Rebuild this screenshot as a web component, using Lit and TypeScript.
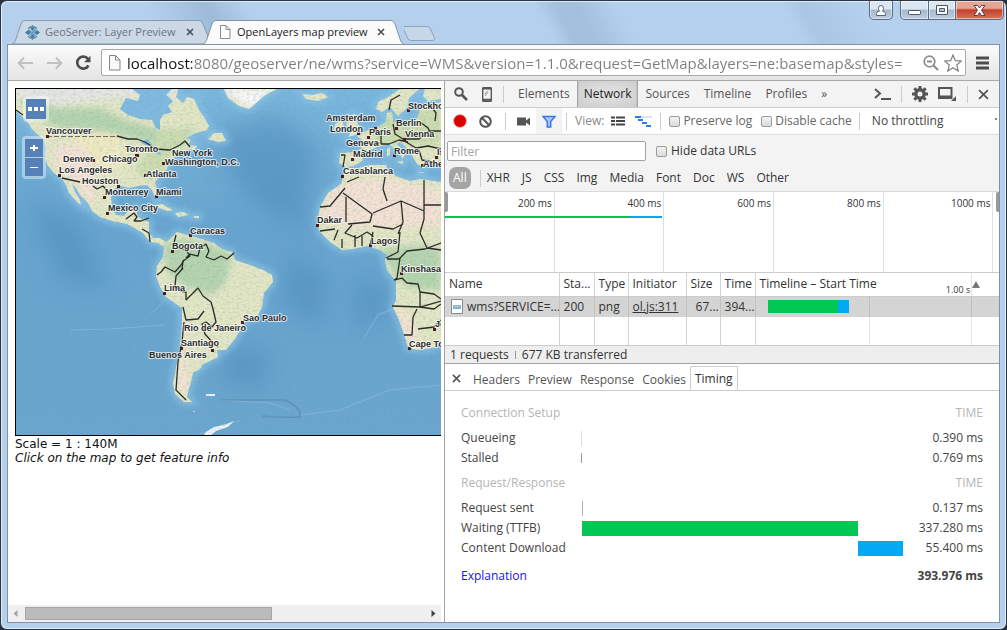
import { LitElement, html, css, svg } from "lit";
import { customElement } from "lit/decorators.js";
import { classMap } from "lit/directives/class-map.js";

const reset = css`
  * { box-sizing: border-box; }
  button, input, select {
    font: inherit; color: inherit; margin: 0; padding: 0;
    border: 0; background: none; outline: none; appearance: none; border-radius: 0;
  }
  svg { display: block; flex: none; }
`;

/* ---------- window caption and tab strip ---------- */

@customElement("tab-strip")
export class TabStrip extends LitElement {
  static styles = [reset, css`
    :host { display: flex; justify-content: space-between; height: 43px; padding-left: 11px; font-size: 11px; }
    .tabs { display: flex; align-items: flex-end; }
    .tab { position: relative; display: flex; align-items: center; width: 201px; height: 24px; padding: 0 17px 0 13px; color: #6d747c; }
    .tab + .tab { margin-left: -10px; z-index: 1; color: #222; padding-left: 15px; }
    .shape { position: absolute; inset: 0; width: 100%; height: 100%; }
    .icon, .label, .close { position: relative; }
    .label { flex: 1; text-align: left; padding-left: 5px; white-space: nowrap; line-height: 16px; }
    .close { display: flex; padding: 2px; }
    .new { align-self: flex-end; height: 18px; }
    .controls { display: flex; align-items: flex-start; padding-right: 2px; }
    .win { display: grid; place-items: center; height: 19px; border: 1px solid #5b6b80; border-top: 0;
      background: linear-gradient(#dbe6f1 0 45%, #a5b8cd 50%, #bccee1); box-shadow: inset 0 0 0 1px #ffffff80; }
    .user { width: 24px; border-radius: 0 0 5px 5px; margin-right: 7px; }
    .min { width: 29px; border-radius: 0 0 0 5px; }
    .max { width: 27px; border-left: 0; }
    .shut { width: 48px; border-left: 0; border-radius: 0 0 5px 0; background: linear-gradient(#e5a594 0 40%, #c2402a 50%, #d8735a); }
  `];

  private cross() {
    return html`<svg width="8" height="8" viewBox="0 0 8 8"><path d="M1 1l6 6M7 1l-6 6" stroke="#4e5258" stroke-width="1.7"/></svg>`;
  }

  render() {
    return html`
      <div class="tabs">
        <div class="tab">
          <svg class="shape" viewBox="0 0 202 24" preserveAspectRatio="none">
            <path d="M0 24C3 23 3 21 4 19L9 4Q10 .5 13 .5H188Q191 .5 192 4L198 19Q199 23 202 24Z" fill="#cbd8e6" stroke="#8799ad"/></svg>
          <svg class="icon" width="15" height="15" viewBox="0 0 15 15">
            <path d="M7.500 0L10 3 7.500 6 5 3zM7.500 9L10 12 7.500 15 5 12zM0 7.500L3 5 6 7.500 3 10zM9 7.500L12 5 15 7.500 12 10z" fill="#3f7fa6"/>
            <path d="M3 3.500Q7.500-.5 12 3.500M12 11.500Q7.500 15 3 11.500M3.500 4.500L11 11M11 4L4 11" fill="none" stroke="#5f93b2" stroke-width="1.300"/></svg>
          <span class="label">GeoServer: Layer Preview</span>
          <button class="close" aria-label="Close tab">${this.cross()}</button>
        </div>
        <div class="tab">
          <svg class="shape" viewBox="0 0 202 24" preserveAspectRatio="none">
            <path d="M0 24C3 23 3 21 4 19L9 4Q10 .5 13 .5H189Q192 .5 193 4L198 19Q199 23 202 24Z" fill="#fbfbfb"/>
            <path d="M0 24C3 23 3 21 4 19L9 4Q10 .5 13 .5H189Q192 .5 193 4L198 19Q199 23 202 24" fill="none" stroke="#8293a6"/></svg>
          <svg class="icon" width="14" height="14" viewBox="0 0 14 14"><path d="M2.500.5H8L12 4.500V13.500H2.500zM8 .5V4.500H12" fill="#fff" stroke="#8a8a8a"/></svg>
          <span class="label">OpenLayers map preview</span>
          <button class="close" aria-label="Close tab">${this.cross()}</button>
        </div>
        <button class="new" aria-label="New tab">
          <svg width="34" height="18" viewBox="0 0 34 18"><path d="M1 .5H22Q25 .5 26 2L30.500 12Q31.500 14.500 28 14.500H7Q4.500 14.500 3.500 12L-.5 3Q-1.500 .5 1 .5z" fill="#c6d7e8" stroke="#8fa3ba"/></svg>
        </button>
      </div>
      <div class="controls">
        <button class="win user" aria-label="User"><svg width="10" height="11" viewBox="0 0 10 11"><path d="M.5 10.500V8.500Q.5 6.500 3.500 6.200 2.500 5 2.500 3.200 2.500.5 5 .5T7.500 3.200Q7.500 5 6.500 6.200 9.500 6.500 9.500 8.500V10.500z" fill="#fff" stroke="#596779"/></svg></button>
        <button class="win min" aria-label="Minimize"><svg width="13" height="12" viewBox="0 0 13 12"><rect x=".5" y="6.500" width="12" height="4" rx="1" fill="#fff" stroke="#4b5767"/></svg></button>
        <button class="win max" aria-label="Maximize"><svg width="12" height="11" viewBox="0 0 12 11"><path d="M.5.5H11.500V9.500H.5zM3.500 3.500V6.500H8.500V3.500z" fill="#fff" fill-rule="evenodd" stroke="#4b5767"/></svg></button>
        <button class="win shut" aria-label="Close"><svg width="13" height="11" viewBox="0 0 13 11"><path d="M1 .5H4.500L6.500 3 8.500.5H12L8.500 5.200 12 10.500H8.500L6.500 7.500 4.500 10.500H1L4.500 5.200z" fill="#fff" stroke="#5b3c45"/></svg></button>
      </div>`;
  }
}

/* ---------- navigation toolbar ---------- */

@customElement("nav-bar")
export class NavBar extends LitElement {
  static styles = [reset, css`
    :host { display: flex; align-items: center; gap: 10px; height: 37px; padding: 0 10px 0 9px;
      background: linear-gradient(#fbfbfb, #e4e4e4); border-bottom: 1px solid #a9a9a9; border-top: 1px solid #8293a6; }
    .btn { display: flex; }
    .btn + .btn { margin-left: 2px; }
    .box { flex: 1; min-width: 0; display: flex; align-items: center; gap: 5px; height: 27px; padding: 0 3px 0 6px;
      background: #fff; border: 1px solid #a8a8a8; border-radius: 2px; }
    .box .btn + .btn { margin-left: 0; }
    .url { flex: 1; min-width: 0; height: 24px; font-size: 15px; line-height: 24px; color: transparent;
      background: linear-gradient(90deg, #111 65px, #7f7f7f 65px); -webkit-background-clip: text; background-clip: text; }
  `];

  render() {
    return html`
      <button class="btn" aria-label="Back"><svg width="17" height="14" viewBox="0 0 17 14"><path d="M7 1.500L1.800 7 7 12.500M2 7H16" fill="none" stroke="#c2c2c2" stroke-width="2.200"/></svg></button>
      <button class="btn" aria-label="Forward"><svg width="17" height="14" viewBox="0 0 17 14"><path d="M10 1.500L15.200 7 10 12.500M15 7H1" fill="none" stroke="#c2c2c2" stroke-width="2.200"/></svg></button>
      <button class="btn" aria-label="Reload"><svg width="16" height="16" viewBox="0 0 16 16"><path d="M13.200 4.200A6 6 0 1 0 13.500 10.500" fill="none" stroke="#4c4c4c" stroke-width="2.600"/><path d="M15.500 .8V7.300H9z" fill="#4c4c4c"/></svg></button>
      <div class="box">
        <svg width="14" height="16" viewBox="0 0 14 16"><path d="M1.500.5H7.500L12 5V15H1.500zM7.500.5V5H12" fill="#fafafa" stroke="#858585"/></svg>
        <input class="url" aria-label="Address" .value=${"localhost:8080/geoserver/ne/wms?service=WMS&version=1.1.0&request=GetMap&layers=ne:basemap&styles="}>
        <button class="btn" aria-label="Zoom"><svg width="16" height="16" viewBox="0 0 16 16"><circle cx="6.500" cy="6.500" r="5.300" fill="none" stroke="#8d8d8d" stroke-width="1.700"/><path d="M4 6.500H9M10.500 10.500L15 15" stroke="#8d8d8d" stroke-width="2"/></svg></button>
        <button class="btn" aria-label="Bookmark"><svg width="18" height="18" viewBox="0 0 18 18"><path d="M9 1L11.300 6.700 17.300 7.100 12.700 11 14.200 17 9 13.700 3.800 17 5.300 11 .7 7.100 6.700 6.700z" fill="#fff" stroke="#808080" stroke-width="1.200"/></svg></button>
      </div>
      <button class="btn" aria-label="Menu"><svg width="13" height="14" viewBox="0 0 13 14"><path d="M0 2H13M0 7H13M0 12H13" stroke="#4c4c4c" stroke-width="3"/></svg></button>`;
  }
}

/* ---------- map page ---------- */

const LAND = [
  "M16 89H178L176 97 183 103 187 97 194 99 199 110 204 117 209 126 207 130 196 133 186 138 191 140 188 145 197 146 195 149 186 150 180 154 173 158 168 163 167 169 160 176 155 182 157 190 158 197 155 197 152 190 147 185 138 186 130 188 120 186 114 189 111 197 112 208 116 215 124 216 128 211 137 208 137 215 141 219 149 222 149 233 153 238 160 238 166 242 170 239 177 232 184 234 195 237 205 240 214 243 222 249 232 252 235 260 250 265 263 270 272 275 273 282 264 293 262 307 257 317 246 321 240 330 235 339 226 350 217 350 218 357 210 361 203 364 200 369 193 373 191 382 188 392 187 397 192 402 184 402 175 394 173 383 177 363 180 347 182 323 182 308 166 297 160 287 156 276 157 266 163 257 164 247 158 243 150 242 143 233 127 224 112 221 100 217 92 211 88 203 80 195 76 188 72 183 75 192 80 200 81 205 76 201 69 193 66 185 62 179 54 173 48 166 45 158 46 148 44 139 38 135 32 129 27 121 16 111z",
  "M224 89H277L265 95 256 103 249 109 239 106 228 98z",
  "M302 94L312 95 322 93 328 97 318 101 306 99z",
  "M208 139L214 133 222 133 226 141 218 142z",
  "M152 206L162 204 173 210 168 211zM175 213L184 212 188 215 178 217zM194 216h5v2h-5z",
  "M335 124L342 120 344 127 339 131 334 130zM348 116L355 114 356 120 361 129 359 134 348 137 352 130 346 125z",
  "M345 168L358 168 370 165 386 165 388 172 398 177 410 181 421 179 441 182V344L433 348 417 350 408 348 405 337 399 320 393 307 396 300 396 281 387 270 385 260 387 255 380 250 368 246 353 249 342 250 330 242 320 232 317 223 320 207 328 193 341 184 344 175z",
  "M340 153L356 152 361 149 363 141 357 136 366 131 378 127 386 122 387 113 392 112 393 122 407 122 417 119 421 107 431 104 441 102V166L429 163 424 168 417 164 409 150 400 142 397 144 405 153 403 159 398 152 389 144 377 147 364 153 362 161 354 166 346 167 339 163z",
  "M376 109L378 102 388 97 400 89H419L409 98 407 108 398 116 390 107 382 112zM425 89H441V99L428 101 423 96z",
  "M387 149l3-2v8l-3 1zM396 162l7-1v3zM417 172l7 0-2 1z",
];

const BORDERS = [
  "M117 136L128 139 137 139 145 142 156 149 170 150 180 145 185 141 190 147",
  "M62 178L80 182M93 186L97 189 103 186 109 193",
  "M16 110L23 115M126 219l8-6 3 4-3 4h7l8-3M142 229l7 4 1 9M176 235l-2 8 5 5 7 2 4 6-7 5-1 9M186 258l4-4 8 2 2-8 6-4 3 7-3 6 8 3 7-4 6 3 7-6",
  "M157 275l4-3 4-5 10 5 6-7 3-5M183 268l-7 8-1 10 5 5 6 1 0 8 12-12 5 8 8 6 2 7 3 13-4 5-6-5-4 2 3 10 8 9 5 4M183 307l3 13 12-1 6-8M184 322l-2 20-4 20-2 28 10 10",
  "M343 193L372 214 370 222 348 224M347 182l12-5M345 188l-15 18-10 1M346 197V222M373 213L401 201 424 211V180M387 201l-4-12 2-12M401 201l2 21-5 12M424 211l0 8-4 14 7 15 14 2M373 226l20 3 10-5M400 232l-2 20-12 6M352 225l-7 8 12 5 10-6 6 4-3 10M342 248l0-9M355 247v-12M362 246v-10M320 231l15-2M334 240l4-10M370 246l3-14M387 259h12l8-8 18-2 16-6M400 258l-3 20-3 2M394 280l8-2 5 5 11 1 2 8 14 2 7 5M392 306l28 1 21-6M420 292l0 15 14 2 7-5M417 309l-4 8-1 18-8 0M418 329l16-2 7-7M424 205h17",
  "M341 155l4 0-2 12M362 150l12 5M375 130l6 6 0 8 8 0 10 -4 9 2M393 124l2 10 8 5 16 0 10-8 12 0M406 142l10 6 12-2 13 3M420 122l8 6 3 6M419 150l3 10 11 2M400 95l-9 5-2 10M430 105l6 8-1 8",
];

const GREENS = [
  "M163 245L185 238 214 246 232 254 226 283 212 295 196 290 180 284 166 270z",
  "M375 250L420 245 441 250V290L410 288 396 278 388 262z",
  "M20 100L60 108 100 108 125 120 160 130 195 128 180 150 150 142 110 133 60 128 40 120z",
];

const SANDS = [
  "M330 190L348 182 385 178 441 190V226L400 228 340 226 320 220z",
  "M55 146L80 142 92 158 96 200 92 207 72 180 56 168z",
  "M183 308L188 325 184 350 190 392 178 392 178 362 182 340z",
  "M394 307L406 312 420 340 408 344z",
];

const CITIES: [string, number, number, number, number][] = [
  ["Vancouver", 46, 134, 47, 136], ["Toronto", 125, 152, 137, 155], ["New York", 172, 156, 178, 154],
  ["Denver", 63, 162, 93, 160], ["Chicago", 102, 162, 136, 155], ["Washington, D.C.", 165, 165, 163, 163],
  ["Los Angeles", 59, 173, 59, 175], ["Atlanta", 146, 177, 145, 175], ["Houston", 82, 184, 118, 186],
  ["Monterrey", 105, 195, 104, 197], ["Miami", 156, 195, 156, 196], ["Mexico City", 108, 211, 107, 213],
  ["Caracas", 190, 234, 190, 235], ["Bogota", 172, 249, 172, 251], ["Lima", 164, 291, 164, 293],
  ["Sao Paulo", 243, 321, 242, 322], ["Rio de Janeiro", 184, 331, 218, 326], ["Santiago", 181, 346, 181, 348],
  ["Buenos Aires", 149, 358, 212, 350], ["Amsterdam", 326, 121, 375, 128], ["London", 330, 132, 358, 133],
  ["Stockholm", 408, 109, 408, 110], ["Berlin", 396, 126, 396, 128], ["Paris", 369, 135, 368, 137],
  ["Vienna", 405, 137, 404, 139], ["Geneva", 346, 146, 377, 143], ["Madrid", 353, 157, 352, 159],
  ["Rome", 394, 154, 394, 155], ["Athens", 423, 167, 422, 165], ["Is", 437, 155, 436, 157], ["Casablanca", 343, 174, 342, 176],
  ["Dakar", 317, 223, 317, 225], ["Lagos", 371, 244, 370, 245], ["Kinshasa", 401, 272, 401, 273],
  ["Cape Town", 409, 347, 409, 348], ["Jo", 435, 327, 434, 329],
];

@customElement("map-page")
export class MapPage extends LitElement {
  static styles = [reset, css`
    :host { display: flex; flex-direction: column; min-width: 0; background: #fff; border-right: 1px solid #a3a3a3;
      padding: 7px 3px 0 7px; font: 12px/14px "DejaVu Sans", sans-serif; color: #111; }
    .map { position: relative; height: 348px; border: 1px solid #000; border-right: 0; overflow: hidden; margin-bottom: 1px; }
    .canvas { width: 100%; height: 100%; }
    .city { font: bold 9px "Liberation Sans", sans-serif; fill: #2b2b2b; paint-order: stroke; stroke: #ffffffb0; stroke-width: 2px; stroke-linejoin: round; }
    .group { position: absolute; padding: 3px; background: #ffffff66; border-radius: 4px; display: grid; gap: 1px; }
    .opts { left: 7px; top: 7px; }
    .zoom { left: 6px; top: 47px; }
    .ctl { display: grid; place-items: center; width: 20px; height: 20px; background: #5581b8; color: #fff; }
    .zoom .ctl { width: 18px; height: 18px; }
    .note { font-style: italic; }
    .space { flex: 1; }
    .bar { display: flex; align-items: center; justify-content: space-between; height: 17px; margin-left: -7px; padding: 0 5px; gap: 7px; background: #f0f0f0; }
    .track { flex: 1; }
    .thumb { width: 62%; height: 13px; background: #bbb; border: 1px solid #a6a6a6; }
  `];

  render() {
    return html`
      <div class="map">
        <svg class="canvas" viewBox="16 89 425 346" preserveAspectRatio="xMinYMin slice">
          <defs>
            <linearGradient id="sea" x1="0" y1="0" x2="0" y2="1"><stop offset="0" stop-color="#7ab7de"/><stop offset=".4" stop-color="#66a5d0"/><stop offset="1" stop-color="#6aa6cf"/></linearGradient>
            <filter id="soft" x="-20%" y="-20%" width="140%" height="140%"><feGaussianBlur stdDeviation="12"/></filter>
            <filter id="edge"><feGaussianBlur stdDeviation="3"/></filter>
            <filter id="relief" x="0" y="0" width="100%" height="100%"><feTurbulence type="fractalNoise" baseFrequency=".3 .5" numOctaves="3" seed="7"/><feColorMatrix values="0 0 0 0 .2  0 0 0 0 .3  0 0 0 0 .4  0 2.200 0 0 -1"/></filter>
            <clipPath id="ground">${LAND.map((d) => svg`<path d=${d}/>`)}</clipPath>
          </defs>
          <rect x="16" y="89" width="425" height="346" fill="url(#sea)"/>
          <g filter="url(#soft)" fill="#4a88b8" opacity=".5">
            <path d="M215 130L280 115 320 150 300 230 250 200 220 160zM290 250L330 280 320 330 280 300zM360 270L385 290 385 320 350 330zM222 350L270 345 265 390 225 385zM30 190L70 220 110 290 60 280z"/></g>
          <g fill="none" stroke="#8cc4e6" stroke-width="7" filter="url(#edge)" opacity=".8">${LAND.map((d) => svg`<path d=${d}/>`)}</g>
          <g fill="none" stroke="#8fbfdf" stroke-width="1" opacity=".6">
            <path d="M70 330L110 329 165 325M150 315L165 300M364 338L378 315 395 308M300 415L340 410 390 390 440 385M220 400L270 403 290 410M200 434L222 425 240 421"/></g>
          <path d="M220 400L285 400Q302 408 300 417 280 418 262 416" fill="none" stroke="#4f7f9f" stroke-width="1.500" opacity=".5"/>
          ${LAND.map((d) => svg`<path d=${d} fill="#e2e6c4"/>`)}
          <g clip-path="url(#ground)">
            <g filter="url(#edge)">
              <path d="M16 80H240V98H120L60 105 16 98z" fill="#e3e7e0"/>
              <path d="M70 128L120 132 124 160 112 178 90 160 74 145z" fill="#efe9c2"/>
              ${GREENS.map((d) => svg`<path d=${d} fill="#b5d4ae"/>`)}
              ${SANDS.map((d) => svg`<path d=${d} fill="#f3e2d3"/>`)}
              <path d="M160 130L190 128 168 165 152 182 135 170zM370 120L441 105V145L375 145z" fill="#cbdcae"/>
              <path d="M224 89H277L250 110z" fill="#f6f7f8"/>
            </g>
          </g>
          <path d="M120 109L126 98 138 101 140 95 132 89H172L166 95 173 101 168 106 172 112 163 115 160 120 160 130 156 128 152 120 140 119 128 115zM140 142l8-3 5 7-8-1zM152 151l10 2-2 2zM188 89h10l8 8-8 2z" fill="#7fbae0"/>
          <path d="M206 432L214 427 224 425 234 421 228 427 216 431 211 435H204zM206 394h9v2h-9zM192 411h3v1z" fill="#eef3f6"/>
          <rect x="16" y="89" width="425" height="346" filter="url(#relief)" opacity=".3"/>
          <g fill="none" stroke="#2a2d26" stroke-width="1.300" stroke-linejoin="bevel">${BORDERS.map((d) => svg`<path d=${d}/>`)}</g>
          <path d="M47 136.500H117" stroke="#6c6e58" stroke-dasharray="5 2"/>
          ${CITIES.map(([name, x, y, cx, cy]) => svg`<rect x=${cx - 1} y=${cy - 1} width="3" height="3" fill="#4a1c20"/><text class="city" x=${x} y=${y}>${name}</text>`)}
        </svg>
        <div class="group opts"><button class="ctl" aria-label="Options"><svg width="18" height="4" viewBox="0 0 18 4"><path d="M1 0h4v4H1zM7 0h4v4H7zM13 0h4v4h-4z" fill="#fff"/></svg></button></div>
        <div class="group zoom">
          <button class="ctl" aria-label="Zoom in"><svg width="8" height="8" viewBox="0 0 8 8"><path d="M0 4H8M4 1V7" stroke="#fff" stroke-width="2"/></svg></button>
          <button class="ctl" aria-label="Zoom out"><svg width="8" height="8" viewBox="0 0 8 8"><path d="M0 4.500H8" stroke="#fff"/></svg></button>
        </div>
      </div>
      <div>Scale = 1 : 140M</div>
      <div class="note">Click on the map to get feature info</div>
      <div class="space"></div>
      <div class="bar">
        <svg width="5" height="7" viewBox="0 0 5 7"><path d="M4.500 0V7L.5 3.500z" fill="#a3a3a3"/></svg>
        <div class="track"><div class="thumb"></div></div>
        <svg width="5" height="7" viewBox="0 0 5 7"><path d="M.5 0V7L4.500 3.500z" fill="#444"/></svg>
      </div>`;
  }
}

/* ---------- request timing ---------- */

interface Phase { label: string; ms: number; kind: string; }
const SETUP: Phase[] = [{ label: "Queueing", ms: 0.39, kind: "queue" }, { label: "Stalled", ms: 0.769, kind: "stall" }];
const RESPONSE: Phase[] = [
  { label: "Request sent", ms: 0.137, kind: "sent" }, { label: "Waiting (TTFB)", ms: 337.28, kind: "wait" },
  { label: "Content Download", ms: 55.4, kind: "load" },
];
const TOTAL = 393.976;

@customElement("timing-panel")
export class TimingPanel extends LitElement {
  static styles = [reset, css`
    :host { display: block; flex: 1; padding: 12px 16px; background: #fff; color: #444; }
    table { width: 100%; table-layout: fixed; border-collapse: collapse; }
    .name { width: 120px; }
    .amount { width: 80px; }
    td, th { padding: 0; height: 20px; text-align: left; font-weight: normal; white-space: nowrap; }
    .head th { color: #b5b5b5; height: 20px; }
    .gap td { height: 5px; }
    .value, .head .value { text-align: right; }
    .bar { height: 15px; min-width: 1px; }
    .queue { background: #ddd; } .stall { background: #999; height: 10px; } .sent { background: #a3b4b8; }
    .wait { background: #00c853; } .load { background: #03a9f4; }
    .total { font-weight: bold; }
    a { color: #1515e0; text-decoration: none; }
    .space td { height: 8px; }
  `];

  private rows(phases: Phase[], start: number) {
    let at = start;
    return phases.map((p) => {
      const left = at;
      at += p.ms;
      return html`<tr><td>${p.label}</td>
        <td><div class="bar ${p.kind}" style="margin-left:${(left / TOTAL) * 100}%;width:${(p.ms / TOTAL) * 100}%"></div></td>
        <td class="value">${p.ms.toFixed(3)} ms</td></tr>`;
    });
  }

  render() {
    return html`<table>
      <colgroup><col class="name"><col><col class="amount"></colgroup>
      <tbody>
        <tr class="head"><th colspan="2">Connection Setup</th><th class="value">TIME</th></tr>
        <tr class="gap"><td colspan="3"></td></tr>
        ${this.rows(SETUP, 0)}
        <tr class="gap"><td colspan="3"></td></tr>
        <tr class="head"><th colspan="2">Request/Response</th><th class="value">TIME</th></tr>
        <tr class="gap"><td colspan="3"></td></tr>
        ${this.rows(RESPONSE, 1.159)}
        <tr class="space"><td colspan="3"></td></tr>
        <tr><td colspan="2"><a href="#">Explanation</a></td><td class="value total">${TOTAL} ms</td></tr>
      </tbody></table>`;
  }
}

/* ---------- developer tools ---------- */

const SPAN = 1010;
const TICKS = [200, 400, 600, 800, 1000];

@customElement("dev-tools")
export class DevTools extends LitElement {
  static styles = [reset, css`
    :host { display: flex; flex-direction: column; min-width: 0; background: #fff; color: #333; }
    .row { display: flex; align-items: center; }
    .top { height: 27px; background: #f3f3f3; border-bottom: 1px solid #ccc; padding: 0 10px 0 9px; color: #555; }
    .ico { display: flex; }
    .sep { width: 1px; height: 17px; background: #ccc; flex: none; }
    .phone { margin: 0 11px 0 14px; }
    .tabs { display: flex; align-self: stretch; padding-left: 7px; }
    .tab { padding: 0 7px; }
    .tab.on { color: #222; background: linear-gradient(90deg, #999, transparent 2px calc(100% - 2px), #999), radial-gradient(ellipse at center, #e4e4e4, #cdcdcd); }
    .right { margin-left: auto; display: flex; align-items: center; gap: 10px; }
    .tools { height: 27px; border-bottom: 1px solid #ddd; padding: 0 2px 0 8px; white-space: nowrap; }
    .rec { width: 14px; height: 14px; border-radius: 50%; background: #d80000; border: 1px solid #f7b4b4; }
    .clear { margin: 0 13px 0 12px; }
    .cam { margin: 0 6px 0 11px; }
    .funnel { width: 26px; height: 26px; display: grid; place-items: center; background: #f3f3f3; margin-right: 4px; }
    .view { margin: 0 7px 0 8px; color: #888; }
    .falls { margin: 0 8px 0 10px; }
    .check { display: flex; align-items: center; gap: 4px; }
    .check input { width: 11px; height: 11px; border: 1px solid #9b9b9b; border-radius: 2px; background: linear-gradient(#f2f2f2, #dcdcdc); }
    .log { margin: 0 9px 0 8px; }
    .log, .cache { color: #666; gap: 3px; }
    .cache { margin-right: 7px; }
    .throttle { flex: 1; min-width: 0; padding-left: 12px; color: #444; }
    .tip { width: 2px; height: 2px; background: #888; align-self: flex-start; margin-top: 10px; }
    .filters { height: 57px; background: #f3f3f3; border-bottom: 1px solid #d9d9d9; padding: 6px 0 0 2px; }
    .find { gap: 10px; }
    .query { width: 199px; height: 20px; border: 1px solid #a3a3a3; border-radius: 2px; background: #fff; padding: 0 3px; }
    .query::placeholder { color: #a5a5a5; opacity: 1; }
    .kinds { gap: 12px; height: 34px; padding-left: 2px; }
    .all { height: 22px; padding: 0 4px; border-radius: 7px; background: #a5a5a5; color: #fff; margin-right: -3px; }
    .kinds .sep { margin-right: -6px; }
    .overview { position: relative; height: 81px; border-bottom: 1px solid #ccc; display: flex; flex-direction: column; overflow: hidden; font-size: 10px; line-height: 12px; }
    .ticks { display: flex; height: 80px; }
    .tick { border-right: 1px solid #e0e0e0; text-align: right; padding: 5px 2px 0 0; flex: none; }
    .load { position: absolute; left: 0; right: 0; top: 24px; height: 2px; display: flex; }
    .ttfb { background: #00c853; } .body { background: #03a9f4; }
    .grip { position: absolute; top: 0; width: 3px; height: 20px; background: #999; }
    .grip.left { left: 0; border-radius: 0 2px 2px 0; } .grip.end { right: 0; border-radius: 2px 0 0 2px; }
    .net { width: 100%; table-layout: fixed; border-collapse: collapse; }
    .net th, .net td { padding: 0 0 0 4px; text-align: left; font-weight: normal; white-space: nowrap; overflow: hidden; border-right: 1px solid #d4d4d4; }
    .net th:last-child, .net td:last-child { border-right: 0; }
    .net th { height: 23px; border-bottom: 1px solid #ccc; }
    .net .hit td { height: 21px; background: #d4d4d4; border-color: #c2c2c2; }
    .net .rest td { height: 28px; }
    .c1 { width: 114px; } .c2 { width: 35px; } .c3 { width: 34px; } .c4 { width: 58px; } .c5 { width: 34px; } .c6 { width: 35px; }
    .file { display: flex; align-items: center; gap: 4px; padding-left: 2px; }
    .size { padding-left: 5px; }
    .src { color: inherit; text-decoration: underline; }
    .net th.scale, .net td.scale { padding: 0; }
    .grid { display: flex; align-items: center; height: 100%; }
    .a { width: 47%; height: 100%; border-right: 1px solid #0000001a; display: flex; align-items: center; flex: none; }
    .b { width: 42%; height: 100%; border-right: 1px solid #0000001a; flex: none; display: flex; align-items: flex-end; justify-content: flex-end; padding: 0 1px 0 0; font-size: 9px; line-height: 12px; }
    .a.text { padding-left: 4px; border-right: 0; }
    .span { display: flex; flex: 1; height: 13px; padding-left: 12px; }
    .span .ttfb { width: 69%; } .span .body { width: 11%; }
    .status { height: 19px; background: #eee; border-top: 1px solid #ccc; border-bottom: 1px solid #a3a3a3; padding-left: 5px; gap: 6px; white-space: pre; }
    .status .sep { height: 8px; background: #999; }
    .detail { height: 27px; border-bottom: 1px solid #ccc; padding: 2px 0 0 7px; color: #555; }
    .detail .tab { padding: 3px 4px 0; }
    .detail .ico { margin-right: 8px; }
    .detail .sel { align-self: stretch; padding: 0 4px; border: 1px solid #ccc; border-bottom: 0; color: #333; }
  `];

  private cross(size: number, width: number) {
    return html`<svg width=${size} height=${size} viewBox="0 0 10 10"><path d="M1 1L9 9M9 1L1 9" stroke="#555" stroke-width=${width}/></svg>`;
  }

  render() {
    const tabs = ["Elements", "Network", "Sources", "Timeline", "Profiles"];
    const kinds = ["XHR", "JS", "CSS", "Img", "Media", "Font", "Doc", "WS", "Other"];
    const cell = html`<div class="grid"><div class="a"></div><div class="b"></div></div>`;
    return html`
      <div class="row top">
        <button class="ico" aria-label="Inspect"><svg width="14" height="14" viewBox="0 0 14 14"><circle cx="5" cy="5" r="3.800" fill="none" stroke="#555" stroke-width="2"/><path d="M8 8L13 13" stroke="#555" stroke-width="2.600"/></svg></button>
        <button class="ico phone" aria-label="Device mode"><svg width="10" height="15" viewBox="0 0 10 15"><path d="M1.500.8H8.500Q9.300.8 9.300 1.600V13.400Q9.300 14.200 8.500 14.200H1.500Q.7 14.200.7 13.400V1.600Q.7.8 1.500.8z" fill="none" stroke="#555" stroke-width="1.400"/><path d="M.5 1.500H9.500M.5 12.800H9.500" stroke="#555" stroke-width="2"/><path d="M3 7L6 3.500M3 9L6 5.500" stroke="#777" stroke-width=".8"/></svg></button>
        <span class="sep"></span>
        <div class="tabs">${tabs.map((t) => html`<button class=${classMap({ tab: true, on: t === "Network" })}>${t}</button>`)}<button class="tab">»</button></div>
        <div class="right">
          <button class="ico" aria-label="Console"><svg width="17" height="12" viewBox="0 0 17 12"><path d="M1 1L6 5.500 1 10M7 11H17" fill="none" stroke="#555" stroke-width="2"/></svg></button>
          <span class="sep"></span>
          <button class="ico" aria-label="Settings"><svg width="16" height="16" viewBox="0 0 16 16"><circle cx="8" cy="8" r="4.200" fill="none" stroke="#555" stroke-width="3.400"/><path d="M8 0V3M8 13V16M0 8H3M13 8H16M2.300 2.300L4.500 4.500M11.500 11.500L13.700 13.700M2.300 13.700L4.500 11.500M11.500 4.500L13.700 2.300" stroke="#555" stroke-width="3"/></svg></button>
          <button class="ico" aria-label="Dock side"><svg width="19" height="14" viewBox="0 0 19 14"><path d="M1 1H13.500V11H1z" fill="none" stroke="#555" stroke-width="2"/><path d="M1 8.500H14V12H1zM18 9V14H13z" fill="#555"/></svg></button>
          <span class="sep"></span>
          <button class="ico" aria-label="Close tools">${this.cross(11, 1.6)}</button>
        </div>
      </div>
      <div class="row tools">
        <button class="rec" aria-label="Record"></button>
        <button class="ico clear" aria-label="Clear"><svg width="13" height="13" viewBox="0 0 13 13"><circle cx="6.500" cy="6.500" r="5.300" fill="none" stroke="#555" stroke-width="2"/><path d="M2.800 2.800L10.200 10.200" stroke="#555" stroke-width="2"/></svg></button>
        <span class="sep"></span>
        <button class="ico cam" aria-label="Capture screenshots"><svg width="13" height="9" viewBox="0 0 13 9"><path d="M0 .5H9V3.500L13 .5V8.500L9 5.500V8.500H0z" fill="#555"/></svg></button>
        <button class="funnel" aria-label="Filter"><svg width="14" height="13" viewBox="0 0 14 13"><path d="M1 1.500H13L8.700 6.500V12H5.300V6.500z" fill="#a8c7fa" stroke="#3b78e7" stroke-width="1.500"/></svg></button>
        <span class="sep"></span>
        <span class="view">View:</span>
        <button class="ico" aria-label="Large rows"><svg width="14" height="10" viewBox="0 0 14 10"><path d="M0 1.500H4M5 1.500H14M0 5H4M5 5H14M0 8.500H4M5 8.500H14" stroke="#444" stroke-width="2.200"/></svg></button>
        <button class="ico falls" aria-label="Waterfall"><svg width="17" height="11" viewBox="0 0 17 11"><path d="M6 1H17" stroke="#d5e3fb" stroke-width="2"/><path d="M0 1H6M3 4H8M7 7H12M11 10H16" stroke="#3b78e7" stroke-width="2"/></svg></button>
        <span class="sep"></span>
        <label class="check log"><input type="checkbox">Preserve log</label>
        <label class="check cache"><input type="checkbox">Disable cache</label>
        <span class="sep"></span>
        <select class="throttle" aria-label="Throttling"><option>No throttling</option></select>
        <span class="tip"></span>
      </div>
      <div class="filters">
        <div class="row find">
          <input class="query" placeholder="Filter" aria-label="Filter">
          <label class="check"><input type="checkbox">Hide data URLs</label>
        </div>
        <div class="row kinds"><button class="all">All</button><span class="sep"></span>${kinds.map((k) => html`<button>${k}</button>`)}</div>
      </div>
      <div class="overview">
        <div class="ticks">${TICKS.map((t) => html`<div class="tick" style="width:${(200 / SPAN) * 100}%">${t} ms</div>`)}</div>
        <div class="load"><div class="ttfb" style="width:${(338 / SPAN) * 100}%"></div><div class="body" style="width:${(57 / SPAN) * 100}%"></div></div>
        <div class="grip left"></div><div class="grip end"></div>
      </div>
      <table class="net">
        <colgroup><col class="c1"><col class="c2"><col class="c3"><col class="c4"><col class="c5"><col class="c6"><col></colgroup>
        <thead><tr><th>Name</th><th>Sta...</th><th>Type</th><th>Initiator</th><th>Size</th><th>Time</th>
          <th class="scale"><div class="grid"><div class="a text">Timeline – Start Time</div><div class="b">1.00 s</div><svg width="8" height="7" viewBox="0 0 8 7"><path d="M4 0L8 7H0z" fill="#777"/></svg></div></th></tr></thead>
        <tbody>
          <tr class="hit"><td><div class="file"><svg width="12" height="15" viewBox="0 0 12 15"><path d="M.5.5H11.500V14.500H.5z" fill="#fff" stroke="#8a8a8a"/><path d="M2 6H10V10H2z" fill="#7fb0d4"/><path d="M3 8l2-1 2 1 2-1" stroke="#c9d9b8" fill="none"/></svg>wms?SERVICE=...</div></td>
            <td>200</td><td>png</td><td><a class="src" href="#">ol.js:311</a></td><td><div class="size">67...</div></td><td>394...</td>
            <td class="scale"><div class="grid"><div class="a"><div class="span"><div class="ttfb"></div><div class="body"></div></div></div><div class="b"></div></div></td></tr>
          <tr class="rest"><td></td><td></td><td></td><td></td><td></td><td></td><td class="scale">${cell}</td></tr>
        </tbody>
      </table>
      <div class="row status"><span>1 requests</span><span class="sep"></span><span>677 KB transferred</span></div>
      <div class="row detail">
        <button class="ico" aria-label="Close details">${this.cross(9, 1.7)}</button>
        ${["Headers", "Preview", "Response", "Cookies"].map((t) => html`<button class="tab">${t}</button>`)}
        <button class="tab sel">Timing</button>
      </div>
      <timing-panel></timing-panel>`;
  }
}

/* ---------- browser window ---------- */

@customElement("app-root")
export class AppRoot extends LitElement {
  static styles = [reset, css`
    :host { display: block; height: 100vh; background: #2a3140; font: 12px/16px "Open Sans", sans-serif; }
    .window { display: flex; flex-direction: column; height: 100%; border: 1px solid #2c3543; border-radius: 7px; overflow: hidden;
      background:
        linear-gradient(62deg, transparent 16%, #9dbbd8 22%, transparent 26% 54%, #a4c0dc 56%, #a4c0dc 58%, transparent 62% 78%, #a9c6e3 80%, transparent 86%) top / 100% 44px no-repeat,
        #b5d0ec;
      box-shadow: inset 0 0 0 1px #ffffffa0; }
    .content { flex: 1; min-height: 0; display: flex; flex-direction: column; margin: 0 6px 6px; border: 1px solid #7f93a8; border-top: 0; }
    .split { flex: 1; min-height: 0; display: grid; grid-template-columns: 441fr 559fr; }
  `];

  render() {
    return html`<div class="window">
      <tab-strip></tab-strip>
      <div class="content">
        <nav-bar></nav-bar>
        <div class="split"><map-page></map-page><dev-tools></dev-tools></div>
      </div>
    </div>`;
  }
}
